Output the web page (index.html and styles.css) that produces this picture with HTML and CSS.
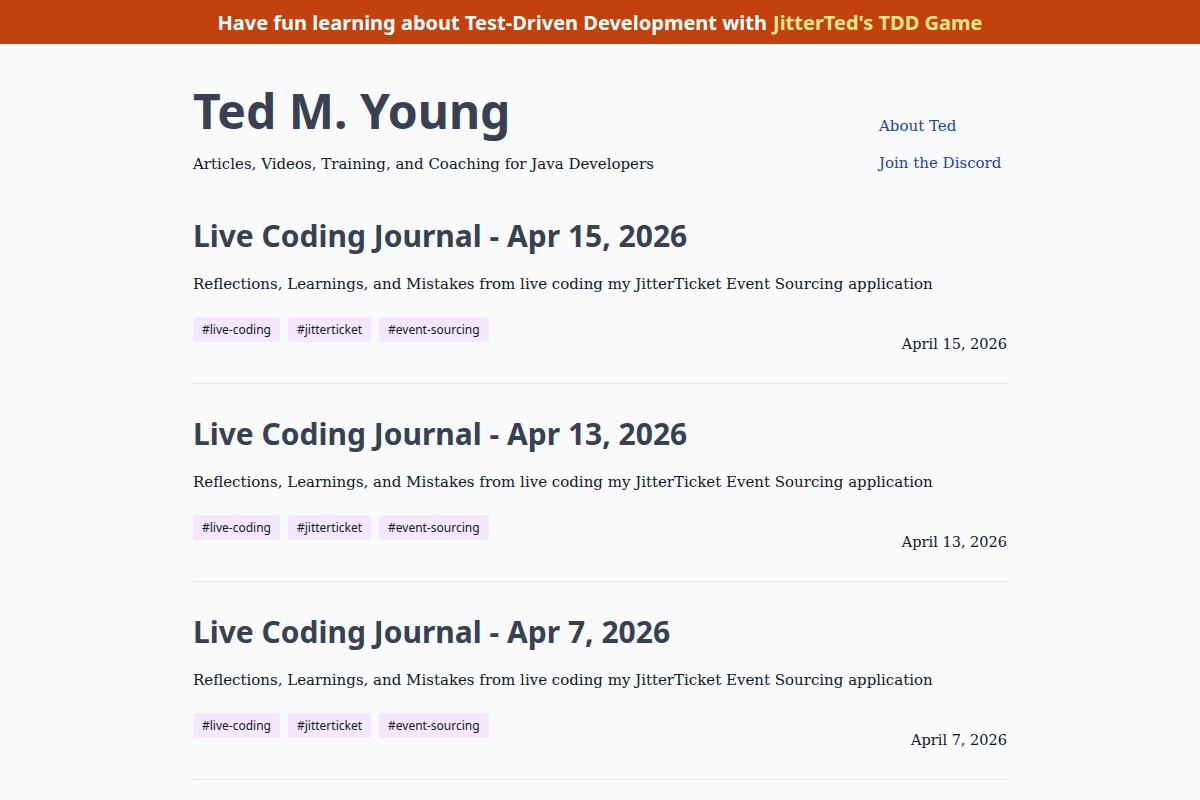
FILE: index.html
```html
<!DOCTYPE html>
<html>
<head>
<meta http-equiv="Content-Type" content="text/html; charset=utf-8"/>
<title>Ted M. Young</title>
<link rel="stylesheet" href="styles.css">
</head>
<body>
<div class="banner">
  Have fun learning about Test-Driven Development with <a href="#">JitterTed's TDD Game</a>
</div>

<div class="page">
  <header class="site-header">
    <div class="brand">
      <h1>Ted M. Young</h1>
      <p class="tagline">Articles, Videos, Training, and Coaching for Java Developers</p>
    </div>
    <nav class="site-nav">
      <a href="#">About Ted</a>
      <a href="#">Join the Discord</a>
    </nav>
  </header>

  <article class="post">
    <h2>Live Coding Journal - Apr 15, 2026</h2>
    <p class="summary">Reflections, Learnings, and Mistakes from live coding my JitterTicket Event Sourcing application</p>
    <div class="meta">
      <div class="tags">
        <span class="tag">#live-coding</span>
        <span class="tag">#jitterticket</span>
        <span class="tag">#event-sourcing</span>
      </div>
      <span class="date">April 15, 2026</span>
    </div>
  </article>

  <article class="post">
    <h2>Live Coding Journal - Apr 13, 2026</h2>
    <p class="summary">Reflections, Learnings, and Mistakes from live coding my JitterTicket Event Sourcing application</p>
    <div class="meta">
      <div class="tags">
        <span class="tag">#live-coding</span>
        <span class="tag">#jitterticket</span>
        <span class="tag">#event-sourcing</span>
      </div>
      <span class="date">April 13, 2026</span>
    </div>
  </article>

  <article class="post">
    <h2>Live Coding Journal - Apr 7, 2026</h2>
    <p class="summary">Reflections, Learnings, and Mistakes from live coding my JitterTicket Event Sourcing application</p>
    <div class="meta">
      <div class="tags">
        <span class="tag">#live-coding</span>
        <span class="tag">#jitterticket</span>
        <span class="tag">#event-sourcing</span>
      </div>
      <span class="date">April 7, 2026</span>
    </div>
  </article>
</div>
</body>
</html>
```

FILE: styles.css
```css
body {
  margin: 0;
  background-color: #f8fafc;
  color: #111827;
  font-family: "DejaVu Serif", serif;
}

.banner {
  height: 44px;
  display: flex;
  align-items: center;
  justify-content: center;
  background-color: #c2410c;
  color: #fff;
  font-family: "Noto Sans", sans-serif;
  font-weight: 700;
  font-size: 20px;
}

.banner a {
  color: #fde68a;
  text-decoration: none;
  margin-left: 6px;
}

.page {
  width: 814px;
  margin: 0 auto;
}

.site-header {
  display: flex;
  justify-content: space-between;
  padding-top: 37px;
  margin-bottom: 10px;
}

.site-header h1 {
  margin: 0;
  font-family: "Noto Sans", sans-serif;
  font-size: 48px;
  line-height: 60px;
  font-weight: 700;
  color: #374151;
}

.tagline {
  margin: 11px 0 0;
  font-size: 15px;
  line-height: 24px;
}

.site-nav {
  width: 128px;
  display: flex;
  flex-direction: column;
  gap: 13px;
  padding-top: 33px;
}

.site-nav a {
  color: #1e40af;
  text-decoration: none;
  font-size: 15px;
  line-height: 24px;
}

.post {
  padding-top: 30px;
  padding-bottom: 27px;
  border-bottom: 1px dotted #d1d5db;
}

.post h2 {
  margin: 0;
  font-family: "Noto Sans", sans-serif;
  font-size: 30px;
  line-height: 40px;
  font-weight: 700;
  color: #374151;
}

.summary {
  margin: 16px 0 0;
  font-size: 15px;
  line-height: 24px;
}

.meta {
  display: flex;
  justify-content: space-between;
  margin-top: 21px;
}

.tags {
  display: flex;
  gap: 8px;
  align-items: flex-start;
}

.tag {
  font-family: "Noto Sans", sans-serif;
  font-size: 12px;
  line-height: 25px;
  padding: 0 9px;
  border-radius: 3px;
  background-color: #f3e8ff;
  color: #111827;
}

.date {
  padding-top: 15px;
  font-size: 14.5px;
  line-height: 24px;
}
```
